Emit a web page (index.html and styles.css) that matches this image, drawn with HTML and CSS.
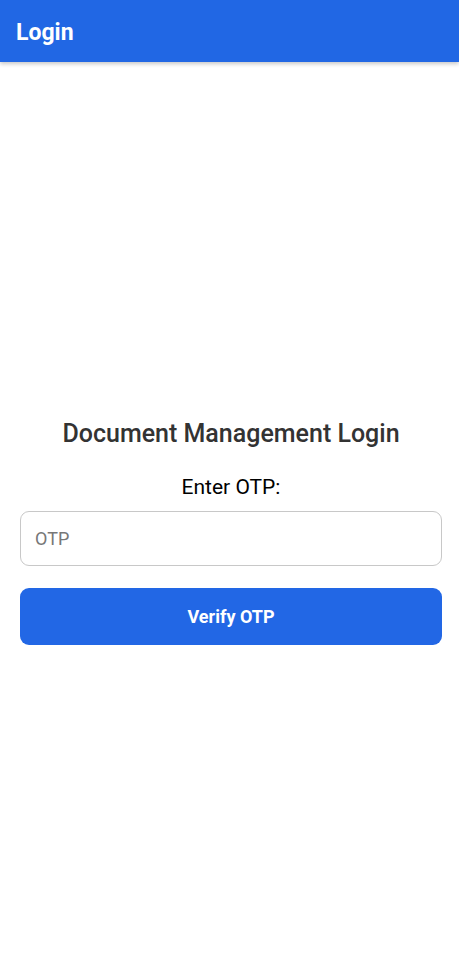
FILE: index.html
```html
<!DOCTYPE html>
<html lang="en">
<head>
<meta charset="utf-8">
<title>Login</title>
<link rel="stylesheet" href="styles.css">
</head>
<body>
<header class="appbar">
  <h1 class="appbar-title">Login</h1>
</header>
<main class="content">
  <h2 class="title">Document Management Login</h2>
  <label class="label" for="otp">Enter OTP:</label>
  <input class="input" id="otp" type="text" placeholder="OTP">
  <button class="button" type="button">Verify OTP</button>
</main>
</body>
</html>
```
FILE: styles.css
```css
* { box-sizing: border-box; }
html, body { margin: 0; padding: 0; }
body {
  font-family: Roboto, "Noto Sans", sans-serif;
  background: #ffffff;
  width: 459px;
  height: 957px;
  overflow: hidden;
}
.appbar {
  height: 62px;
  background: #2167e4;
  display: flex;
  align-items: center;
  padding: 0 16px;
  box-shadow: 0 2px 4px rgba(0,0,0,0.22);
  position: relative;
  z-index: 1;
}
.appbar-title {
  margin: 0;
  color: #ffffff;
  font-size: 23px;
  font-weight: 700;
  line-height: 1;
  padding-top: 2px;
}
.content {
  display: flex;
  flex-direction: column;
  align-items: center;
  padding: 355px 17px 0 20px;
}
.title {
  margin: 0;
  font-size: 25px;
  font-weight: 500;
  color: #333333;
  line-height: 34px;
}
.label {
  margin-top: 24px;
  font-size: 21px;
  color: #000000;
  line-height: 24px;
}
.input {
  margin-top: 12px;
  width: 100%;
  height: 55px;
  border: 1px solid #c8c8c8;
  border-radius: 9px;
  padding: 0 14px;
  font-family: Roboto, sans-serif;
  font-size: 18px;
  color: #333;
  outline: none;
}
.input::placeholder { color: #777777; }
.button {
  margin-top: 22px;
  width: 100%;
  height: 57px;
  border: none;
  border-radius: 9px;
  background: #2267e5;
  color: #ffffff;
  font-family: Roboto, sans-serif;
  font-size: 18px;
  font-weight: 700;
}
```
